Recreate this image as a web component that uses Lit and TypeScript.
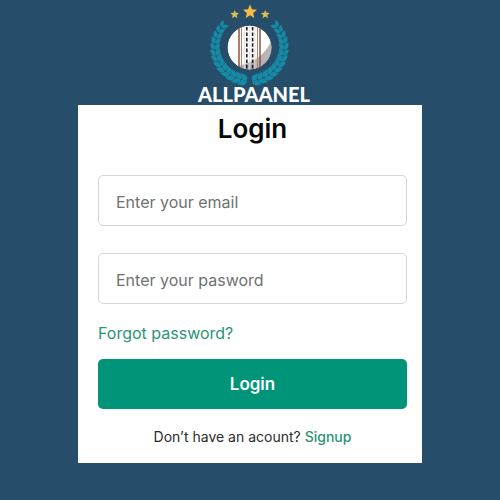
import { LitElement, html, svg, css } from "lit";
import { customElement } from "lit/decorators.js";

const LEAF = "M0 0C0 -4 4 -6 10 -3.5C8 1 4 2.5 0 0Z";

function starPoints(cx: number, cy: number, r: number): string {
  return Array.from({ length: 10 }, (_, i) => {
    const rad = i % 2 ? r * 0.45 : r;
    const a = (Math.PI / 5) * i - Math.PI / 2;
    return `${(cx + rad * Math.cos(a)).toFixed(2)},${(cy + rad * Math.sin(a)).toFixed(2)}`;
  }).join(" ");
}

/* Leaves of one laurel branch, growing from the bottom centre up the left side. */
function branch() {
  const count = 13;
  return Array.from({ length: count }, (_, i) => {
    const deg = 4 + (i * 122) / (count - 1);
    const t = (deg * Math.PI) / 180;
    const x = -34.5 * Math.sin(t);
    const y = 33.5 * Math.cos(t);
    const dir = 180 + deg;
    const s = 1 - i * 0.025;
    return svg`
      <path d=${LEAF} transform="translate(${x.toFixed(2)} ${y.toFixed(2)}) rotate(${(dir - 8).toFixed(1)}) scale(${s.toFixed(2)})"/>
      <path d=${LEAF} transform="translate(${x.toFixed(2)} ${y.toFixed(2)}) rotate(${(dir + 20).toFixed(1)}) scale(${s.toFixed(2)} ${(-s).toFixed(2)})"/>`;
  });
}

@customElement("brand-logo")
export class BrandLogo extends LitElement {
  static styles = css`
    :host { display: block; }
    svg { display: block; width: 128px; height: 105px; }
    .name { font: 900 20px Lato, "Noto Sans", sans-serif; fill: #fff; }
    .star { fill: #f5bd42; }
    .small { fill: #dcc04c; }
    .leaf { fill: #178ba5; stroke: #264e6b; stroke-width: 0.3; }
  `;

  render() {
    return html`
      <svg viewBox="186 0 128 105" role="img" aria-label="ALLPAANEL">
        <defs>
          <clipPath id="ball"><circle cx="249.5" cy="47.5" r="22"/></clipPath>
        </defs>
        <g class="leaf" transform="translate(249.5 47)">${branch()}</g>
        <g class="leaf" transform="translate(249.5 47) scale(-1 1)">${branch()}</g>
        <g clip-path="url(#ball)">
          <circle cx="249.5" cy="47.5" r="22" fill="#fff"/>
          <path d="M272 38C267 54 255 62 238 66L249 71L272 70Z" fill="#b9b4b4"/>
          <path d="M239 25V70M260 25V70" stroke="#8a4636" stroke-width="1.4"/>
          <path d="M241.5 25V70M257.5 25V70" stroke="#b98468" stroke-width="1"/>
          <path d="M244.5 25V70M249.7 25V70M254.9 25V70" stroke="#e2dbd6" stroke-width="0.8"/>
          <path d="M246.8 27V70M252.6 27V70" stroke="#1c1a20" stroke-width="1.6" stroke-dasharray="3.6 1.8"/>
        </g>
        <polygon class="star" points=${starPoints(250, 12, 7.4)}/>
        <polygon class="small" points=${starPoints(234.7, 14.5, 4.6)}/>
        <polygon class="small" points=${starPoints(265.3, 14.5, 4.6)}/>
        <text class="name" x="254" y="102" text-anchor="middle">ALLPAANEL</text>
      </svg>`;
  }
}

@customElement("app-root")
export class AppRoot extends LitElement {
  static styles = css`
    :host {
      display: flex;
      flex-direction: column;
      align-items: center;
      box-sizing: border-box;
      min-height: 100vh;
      padding-bottom: 16px;
      background: #264e6b;
      font-family: Inter, "Liberation Sans", sans-serif;
    }
    * { box-sizing: border-box; }
    .card {
      width: 100%;
      max-width: 344px;
      padding: 8px 15px 16px 20px;
      background: #fff;
      color: #2b2b2b;
    }
    h1 {
      margin: 0 0 30px;
      font-size: 26px;
      line-height: 32px;
      font-weight: 600;
      text-align: center;
      color: #060606;
    }
    form { display: flex; flex-direction: column; }
    .field {
      width: 100%;
      height: 51px;
      margin-bottom: 27px;
      padding: 4px 17px 2px;
      border: 1px solid #d6d6d6;
      border-radius: 5px;
      background: #fff;
      font: 400 16px Inter, sans-serif;
      color: #2b2b2b;
    }
    .field::placeholder { color: #717171; opacity: 1; }
    .field.last { margin-bottom: 19px; }
    a { color: #2a9479; text-decoration: none; }
    .forgot { align-self: flex-start; font-size: 16px; line-height: 20px; }
    .submit {
      height: 50px;
      margin: 16px 0 18px;
      border: 0;
      border-radius: 5px;
      background: #009578;
      color: #fff;
      font: 600 17px Inter, sans-serif;
    }
    .signup { margin: 0; font-size: 14px; line-height: 20px; text-align: center; }
    .signup a { font-weight: 500; }
  `;

  render() {
    return html`
      <header><brand-logo></brand-logo></header>
      <main class="card">
        <h1>Login</h1>
        <form @submit=${(e: Event) => e.preventDefault()}>
          <input class="field" type="email" placeholder="Enter your email" aria-label="Enter your email">
          <input class="field last" type="password" placeholder="Enter your pasword" aria-label="Enter your pasword">
          <a class="forgot" href="#">Forgot password?</a>
          <button class="submit" type="submit">Login</button>
        </form>
        <p class="signup">Don’t have an acount? <a href="#">Signup</a></p>
      </main>`;
  }
}
